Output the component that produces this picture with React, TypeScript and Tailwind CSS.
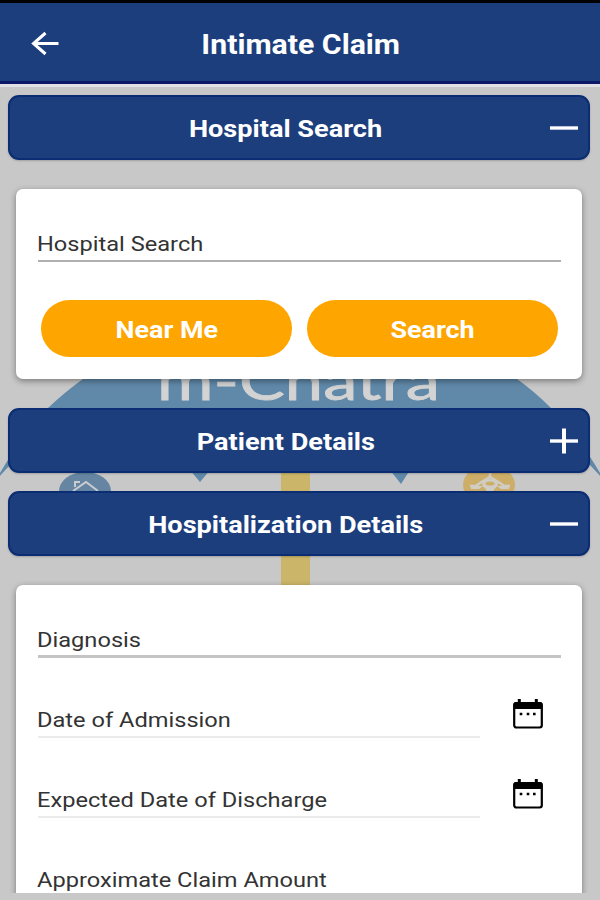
import { useState } from "react";
import type { ReactNode } from "react";

interface SectionProps {
  title: string;
  open: boolean;
  onToggle: () => void;
}

interface FieldProps {
  label: string;
  className?: string;
}

function BackIcon() {
  return (
    <svg width="30" height="26" viewBox="0 0 30 26" fill="none" stroke="white" strokeWidth="3">
      <path d="M28.5 12.5H4M15.5 2L3.5 12.5l12 10.5" />
    </svg>
  );
}

function ToggleIcon({ open }: { open: boolean }) {
  return (
    <svg width="28" height="26" viewBox="0 0 28 26" fill="none" stroke="white" strokeWidth="3.4">
      <path d="M0 13H28" />
      {!open && <path d="M14 0.5V25.5" strokeWidth="4" />}
    </svg>
  );
}

function CalendarIcon() {
  return (
    <svg width="30" height="30" viewBox="0 0 30 30">
      <rect x="1.2" y="4.2" width="27.6" height="24.3" rx="2.2" fill="white" stroke="black" strokeWidth="2.2" />
      <path d="M0.5 10V5.5Q0.5 3 3 3H27Q29.5 3 29.5 5.5V10Z" fill="black" />
      <path d="M6.3 0V4M23.3 0V4" stroke="black" strokeWidth="3" />
      <path d="M6.7 15H9.3M13.7 15H16.3M20 15H22.6" stroke="black" strokeWidth="2.6" />
    </svg>
  );
}

// Faded umbrella logo behind the form
function Watermark() {
  return (
    <svg className="absolute inset-0" width="600" height="900" viewBox="0 0 600 900">
      <path
        d="M-4 480Q22 434 48 408Q66 391 83 379Q170 312 300 312T517 379Q534 391 551 408Q578 434 604 480L590 465L400 465H10Z"
        fill="#6089a9"
      />
      <path d="M190 470H210L200 482ZM390 470H410L401 484Z" fill="#6089a9" />
      <text
        x="157"
        y="400"
        fontFamily="Lato, sans-serif"
        fontSize="53"
        textLength="283"
        lengthAdjust="spacingAndGlyphs"
        fill="#d3d3d3"
        stroke="#d3d3d3"
        strokeWidth="0.8"
      >
        m-Chatra
      </text>
      <rect x="281" y="465" width="29" height="130" fill="#cbb569" />
      <ellipse cx="85" cy="491" rx="26" ry="19" fill="#6585a3" />
      <path d="M73 491L86 482L98 491M75 487V482H80" fill="none" stroke="#c9cdd0" strokeWidth="2" />
      <ellipse cx="489" cy="485" rx="26" ry="20" fill="#ccae69" />
      <path
        d="M490 469V477M470 486H476L480 483L490 477L500 483L504 486H510"
        fill="none"
        stroke="#d0cdc4"
        strokeWidth="2.5"
      />
      <path d="M471 486H509V489H501L497 486L493 491H487L483 486L479 489H471Z" fill="#d0cdc4" />
      <ellipse cx="490" cy="484" rx="8" ry="5" fill="#d0cdc4" />
      <ellipse cx="490" cy="483.5" rx="4.5" ry="2" fill="#ccae69" />
    </svg>
  );
}

function SectionHeader({ title, open, onToggle }: SectionProps) {
  return (
    <button
      onClick={onToggle}
      className="relative flex h-[65px] w-full shrink-0 items-center justify-center rounded-[11px] border-2 border-[#0b2d73] bg-[#1d3e7d] pt-[2px] text-white shadow-[0_1px_2px_rgba(0,0,0,0.2)]"
    >
      <span className="mr-[27px] inline-block scale-x-[1.13] whitespace-nowrap text-[24px] font-bold leading-7">
        {title}
      </span>
      <span className="absolute right-[10px] top-[18px]">
        <ToggleIcon open={open} />
      </span>
    </button>
  );
}

function Card({ children, className = "" }: { children: ReactNode; className?: string }) {
  return (
    <div className={`mx-2 shrink-0 bg-white pl-[22px] pr-[21px] shadow-[0_2px_6px_rgba(0,0,0,0.4)] ${className}`}>
      {children}
    </div>
  );
}

function Field({ label, className = "" }: FieldProps) {
  return (
    <div className={`flex items-end ${className}`}>
      <span className="-ml-px inline-block origin-left scale-x-[1.125] whitespace-nowrap text-[21px] leading-[25px] text-[#333]">
        {label}
      </span>
    </div>
  );
}

function DateField({ label }: { label: string }) {
  return (
    <div className="flex h-[80px] items-end justify-between">
      <Field label={label} className="h-full w-[442px] border-b-2 border-[#ebebeb] pb-[3px]" />
      <button className="mb-[9px] mr-[18px]" aria-label={label}>
        <CalendarIcon />
      </button>
    </div>
  );
}

export default function App() {
  const [searchOpen, setSearchOpen] = useState(true);
  const [patientOpen, setPatientOpen] = useState(false);
  const [detailsOpen, setDetailsOpen] = useState(true);

  return (
    <div className="relative flex h-[900px] w-[600px] flex-col overflow-hidden bg-[#c8c8c8] font-['Roboto',sans-serif]">
      <Watermark />
      <header className="relative flex h-[87px] shrink-0 items-center border-b-[3px] border-t-[3px] border-b-[#e0e0e4] border-t-black bg-[#1d3e7d] text-white shadow-[inset_0_-3px_0_#0c1767]">
        <button className="ml-[30px]" aria-label="Back">
          <BackIcon />
        </button>
        <h1 className="ml-[152px] inline-block scale-x-[1.12] whitespace-nowrap pt-[4px] text-[27px] font-bold">
          Intimate Claim
        </h1>
      </header>

      <main className="relative mb-[7px] flex flex-1 flex-col overflow-hidden pl-2 pr-[10px] pt-2">
        <SectionHeader title="Hospital Search" open={searchOpen} onToggle={() => setSearchOpen(!searchOpen)} />
        {searchOpen && (
          <Card className="mb-[29px] mt-[29px] h-[190px] rounded-[7px]">
            <Field label="Hospital Search" className="h-[73px] border-b-2 border-[#b0b0b0] pb-[3px]" />
            <div className="mt-[38px] flex gap-[15px] px-[3px]">
              <button className="h-[57px] flex-1 rounded-full bg-[#ffa500] pt-[2px] text-[24px] font-bold text-white">
                <span className="inline-block scale-x-[1.12]">Near Me</span>
              </button>
              <button className="h-[57px] flex-1 rounded-full bg-[#ffa500] pt-[2px] text-[24px] font-bold text-white">
                <span className="inline-block scale-x-[1.12]">Search</span>
              </button>
            </div>
          </Card>
        )}

        <SectionHeader title="Patient Details" open={patientOpen} onToggle={() => setPatientOpen(!patientOpen)} />
        <div className="h-[18px] shrink-0" />
        <SectionHeader title="Hospitalization Details" open={detailsOpen} onToggle={() => setDetailsOpen(!detailsOpen)} />
        {detailsOpen && (
          <Card className="mt-[29px] h-[360px] rounded-[7px]">
            <Field label="Diagnosis" className="h-[73px] border-b-[3px] border-[#c4c4c4] pb-[2px]" />
            <DateField label="Date of Admission" />
            <DateField label="Expected Date of Discharge" />
            <Field label="Approximate Claim Amount" className="h-[80px] border-b-2 border-[#c4c4c4] pb-[3px]" />
          </Card>
        )}
      </main>
    </div>
  );
}
